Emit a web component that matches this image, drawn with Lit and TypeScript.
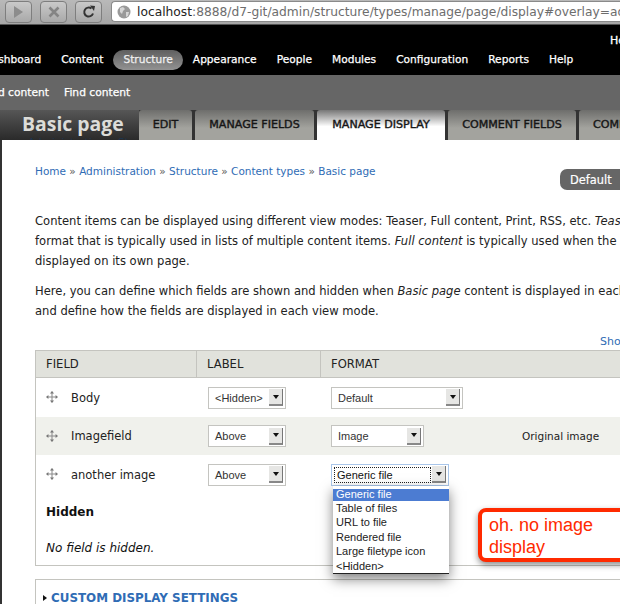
import { LitElement, html, css } from "lit";
import { customElement } from "lit/decorators.js";

const moveIcon = html`<svg class="move" width="12" height="12" viewBox="0 0 14 14">
  <path d="M7 1v12M1 7h12" stroke="#8a8a8a" stroke-width="1.2" fill="none" />
  <path d="M7 0l2.400 2.800H4.600zM7 14l-2.400-2.800h4.800zM0 7l2.800-2.400v4.800zM14 7l-2.800 2.400V4.600z" fill="#777" />
</svg>`;

@customElement("fake-select")
class FakeSelect extends LitElement {
  static properties = { label: {}, w: {}, focused: { type: Boolean } };
  label = "";
  w = "78";
  focused = false;

  static styles = css`
    :host {
      display: block;
      margin-top: 1px;
      font: 11px "Liberation Sans", sans-serif;
    }
    .box {
      box-sizing: border-box;
      height: 22px;
      border: 1px solid #c4c4c0;
      background: #fff;
      display: flex;
      align-items: center;
      padding: 0 2px 0 5px;
      color: #333;
    }
    .focused {
      border-color: #a9c6ea;
      padding-left: 2px;
    }
    .text {
      flex: 1;
      white-space: nowrap;
      line-height: 14px;
      padding-left: 1px;
    }
    .focused .text {
      border: 1px dotted #222;
      color: #111;
      margin-right: 1px;
      padding-left: 2px;
    }
    .btn {
      flex: none;
      width: 13px;
      height: 15px;
      background: #e6e6e4;
      border-right: 1px solid #777;
      border-bottom: 2px solid #888;
      display: flex;
      align-items: center;
      justify-content: center;
    }
    .btn i {
      border: 3.5px solid transparent;
      border-top: 4px solid #111;
      border-bottom: 0;
    }
  `;

  render() {
    return html`<div class="box ${this.focused ? "focused" : ""}" style="width:${this.w}px">
      <span class="text">${this.label}</span><span class="btn"><i></i></span>
    </div>`;
  }
}

@customElement("app-root")
export class AppRoot extends LitElement {
  static styles = css`
    :host {
      display: block;
      width: 620px;
      height: 604px;
      overflow: hidden;
      position: relative;
      background: #fff;
      font: 11px "DejaVu Sans", sans-serif;
      color: #111;
    }

    /* browser toolbar */
    .chrome {
      height: 25px;
      box-sizing: border-box;
      background: linear-gradient(#b9b9b9, #a6a6a6);
      border-bottom: 1px solid #555;
      display: flex;
      align-items: center;
      padding: 0 0 1px 5px;
    }
    .nav-btn {
      box-sizing: border-box;
      width: 27px;
      height: 22px;
      margin-right: 9px;
      border: 1px solid #7e7e7e;
      border-radius: 4px;
      background: linear-gradient(#c9c9c9, #a9a9a9);
      display: flex;
      align-items: center;
      justify-content: center;
      flex: none;
    }
    .nav-btn:first-child,
    .nav-btn:nth-child(2) {
      margin-right: 8px;
    }
    .url {
      flex: 1;
      height: 21px;
      box-sizing: border-box;
      background: #fff;
      border: 1px solid #8a8a8a;
      border-right: 0;
      border-radius: 4px 0 0 4px;
      display: flex;
      align-items: center;
      padding-left: 5px;
      gap: 6px;
      font-size: 12.25px;
      white-space: nowrap;
      overflow: hidden;
      color: #6d6d6d;
    }
    .url b {
      font-weight: normal;
      color: #222;
    }

    /* admin toolbar */
    .top {
      height: 50px;
      background: #000;
      position: relative;
    }
    .hello {
      position: absolute;
      left: 610px;
      top: 9px;
      color: #fff;
      white-space: nowrap;
      -webkit-text-stroke: 0.3px #fff;
    }
    .menu {
      position: absolute;
      left: -26.500px;
      right: 0;
      top: 25px;
      height: 20px;
      display: flex;
      align-items: center;
      color: #fff;
      font-size: 10.64px;
      white-space: nowrap;
      -webkit-text-stroke: 0.25px #fff;
    }
    .menu span {
      padding: 0 10px;
      line-height: 20px;
    }
    .menu .on {
      border-radius: 10px;
      background: linear-gradient(#5f5f5f, #929292);
      color: #e4e4e4;
    }
    .sub {
      height: 35px;
      background: #666;
      display: flex;
      align-items: center;
      gap: 15px;
      color: #fff;
      font-size: 10.7px;
      white-space: nowrap;
      margin-left: -16px;
      -webkit-text-stroke: 0.25px #fff;
    }

    /* title and tabs */
    .head {
      height: 30px;
      background: linear-gradient(#565656, #2a2a2a);
      position: relative;
      display: flex;
    }
    .ghost {
      position: absolute;
      left: -16px;
      top: 26px;
      color: #1d3550;
      font-size: 10.5px;
      white-space: nowrap;
    }
    h1 {
      margin: 0;
      width: 139px;
      box-sizing: border-box;
      padding: 1px 0 0 22px;
      font: bold 19.4px/26px "Open Sans", sans-serif;
      color: #dcdcd8;
      white-space: nowrap;
      position: relative;
      flex: none;
    }
    .tabs {
      flex: 1;
      display: flex;
      background: #333;
      position: relative;
    }
    .tab {
      box-sizing: border-box;
      height: 30px;
      margin-right: 3px;
      flex: none;
      background: linear-gradient(#6e6e6c, #a3a39e 60%);
      border-radius: 3px 3px 0 0;
      font-size: 11.1px;
      -webkit-text-stroke: 0.4px #161616;
      color: #161616;
      padding-top: 8px;
      text-align: center;
      white-space: nowrap;
    }
    .tab.on {
      background: linear-gradient(#777, #fff 55%);
    }
    .tab.last {
      width: 80px;
      text-align: left;
      padding-left: 14px;
    }

    /* page body */
    .page {
      margin-left: 2px;
      position: relative;
      height: 464px;
      background: #fff;
      box-shadow: -2px 0 0 #333;
      padding: 25px 0 0 33px;
      box-sizing: border-box;
      white-space: nowrap;
    }
    a {
      color: #2f6cb5;
      text-decoration: none;
    }
    .crumbs {
      height: 20px;
      color: #555;
      font-size: 10.5px;
    }
    .default {
      position: absolute;
      left: 558px;
      top: 29px;
      width: 70px;
      height: 21px;
      border-radius: 7px;
      background: #666;
      color: #fff;
      font-size: 11.4px;
      -webkit-text-stroke: 0.2px #fff;
      line-height: 22px;
      padding-left: 10px;
      box-sizing: border-box;
    }
    p {
      margin: 0 0 10px;
      line-height: 20px;
      color: #222;
      font-size: 11.56px;
    }
    .intro {
      margin-top: 26px;
    }
    .show {
      position: absolute;
      left: 598px;
      top: 195px;
      color: #2f6cb5;
    }
    .table {
      margin-top: 29px;
      width: 620px;
      box-sizing: border-box;
      border: 1px solid #c4c4bf;
      height: 216px;
    }
    .row {
      display: grid;
      grid-template-columns: 161px 124px 1fr;
      align-items: center;
    }
    .thead {
      height: 26px;
      background: #e1e2dc;
      border-bottom: 1px solid #c4c4bf;
      color: #222;
      font-size: 11.6px;
    }
    .thead div {
      height: 26px;
      line-height: 26px;
      padding-left: 10px;
      border-right: 1px solid #c4c4bf;
    }
    .thead div:last-child {
      border-right: 0;
    }
    .tr {
      height: 38.500px;
    }
    .tr.alt {
      background: #f0f1ec;
    }
    .cell-name {
      display: flex;
      align-items: center;
      padding-left: 10px;
      gap: 13px;
      font-size: 11.5px;
      color: #222;
    }
    .cell-name span {
      padding-top: 1px;
    }
    .cell-label {
      padding-left: 11px;
    }
    .cell-format {
      padding-left: 10px;
      display: flex;
      align-items: center;
    }
    .summary {
      margin-left: 98px;
      color: #222;
      font-size: 10.5px;
    }
    .hidden-title {
      font-weight: bold;
      font-size: 12px;
      margin: 9px 0 0 10px;
      line-height: 18px;
    }
    .no-field {
      font-style: italic;
      font-size: 12px;
      margin: 18px 0 0 10px;
      line-height: 18px;
    }
    .fieldset {
      margin-top: 13px;
      width: 620px;
      box-sizing: border-box;
      border-top: 1px solid #c4c4bf;
      border-left: 1px solid #c4c4bf;
      padding: 9px 0 0 7px;
      display: flex;
      align-items: center;
      height: 28px;
      gap: 4px;
      color: #2f6cb5;
      font-weight: bold;
      font-size: 11.9px;
    }
    .fieldset i {
      border: 3.500px solid transparent;
      border-left: 4px solid #111;
      border-right: 0;
    }

    /* open select popup */
    .popup {
      position: absolute;
      left: 333px;
      top: 486px;
      width: 116px;
      height: 88px;
      box-sizing: border-box;
      background: #fff;
      padding-top: 3px;
      font: 11px/14.400px "Liberation Sans", sans-serif;
      color: #222;
      box-shadow: 0 5px 12px rgba(0, 0, 0, 0.5);
      border-bottom: 1px solid #222;
    }
    .popup div {
      padding-left: 3px;
      height: 14.400px;
      white-space: nowrap;
    }
    .popup .sel {
      height: 12px;
      line-height: 11px;
      background: #4c7cd2;
      color: #fff;
    }

    /* annotation */
    .note {
      position: absolute;
      left: 478px;
      top: 508px;
      width: 160px;
      height: 54px;
      box-sizing: border-box;
      background: #fff;
      border: 4px solid #ff2a00;
      border-radius: 8px;
      box-shadow: 0 3px 6px rgba(0, 0, 0, 0.45);
      color: #ff2a00;
      font: 18px/22px "Liberation Sans", sans-serif;
      padding: 2px 0 0 7px;
    }
  `;

  render() {
    return html`
      <div class="chrome">
        <div class="nav-btn">
          <svg width="11" height="12" viewBox="0 0 11 12"><path d="M1 0l9 6-9 6z" fill="#8c8c8c" /></svg>
        </div>
        <div class="nav-btn">
          <svg width="12" height="12" viewBox="0 0 12 12"><path d="M1.500 1.500l9 9M10.500 1.500l-9 9" stroke="#848484" stroke-width="2.600" /></svg>
        </div>
        <div class="nav-btn">
          <svg width="14" height="14" viewBox="0 0 14 14">
            <path d="M11 8.500A4.500 4.500 0 1 1 9.500 3.500" stroke="#333" stroke-width="2" fill="none" />
            <path d="M8 0.500l5 0.500-1 5z" fill="#333" />
          </svg>
        </div>
        <div class="url">
          <svg width="14" height="14" viewBox="0 0 14 14" style="flex:none">
            <circle cx="7" cy="7" r="6.500" fill="#9a9a9a" />
            <path d="M3 3l3-1 2 2-2 2-1 3-2-2zM9 7l3 0-1 4-2 1z" fill="#d6d6d6" />
          </svg>
          <span><b>localhost</b>:8888/d7-git/admin/structure/types/manage/page/display#overlay=admin</span>
        </div>
      </div>

      <div class="top">
        <div class="hello">Hello admin</div>
        <div class="menu">
          <span>Dashboard</span><span>Content</span><span class="on">Structure</span><span>Appearance</span><span>People</span><span>Modules</span><span>Configuration</span><span>Reports</span><span>Help</span>
        </div>
      </div>
      <div class="sub"><span>Add content</span><span>Find content</span></div>

      <div class="head">
        <div class="ghost">Home » Administration » Structure</div>
        <h1>Basic page</h1>
        <div class="tabs">
          <div class="tab" style="width:53px">EDIT</div>
          <div class="tab" style="width:119px">MANAGE FIELDS</div>
          <div class="tab on" style="width:128px">MANAGE DISPLAY</div>
          <div class="tab" style="width:128px">COMMENT FIELDS</div>
          <div class="tab last">COMMENT DISPLAY</div>
        </div>
      </div>

      <div class="page">
        <div class="crumbs">
          <a>Home</a> » <a>Administration</a> » <a>Structure</a> » <a>Content types</a> » <a>Basic page</a>
        </div>
        <div class="default">Default</div>
        <p class="intro">Content items can be displayed using different view modes: Teaser, Full content, Print, RSS, etc. <em>Teaser</em> is a short<br />
          format that is typically used in lists of multiple content items. <em>Full content</em> is typically used when the content is<br />
          displayed on its own page.</p>
        <p>Here, you can define which fields are shown and hidden when <em>Basic page</em> content is displayed in each view mode,<br />
          and define how the fields are displayed in each view mode.</p>
        <div class="show">Show</div>

        <div class="table">
          <div class="row thead"><div>FIELD</div><div>LABEL</div><div>FORMAT</div></div>
          <div class="row tr">
            <div class="cell-name">${moveIcon}<span>Body</span></div>
            <div class="cell-label"><fake-select label="<Hidden>"></fake-select></div>
            <div class="cell-format"><fake-select label="Default" w="132"></fake-select></div>
          </div>
          <div class="row tr alt">
            <div class="cell-name">${moveIcon}<span>Imagefield</span></div>
            <div class="cell-label"><fake-select label="Above"></fake-select></div>
            <div class="cell-format"><fake-select label="Image" w="93"></fake-select><span class="summary">Original image</span></div>
          </div>
          <div class="row tr">
            <div class="cell-name">${moveIcon}<span>another image</span></div>
            <div class="cell-label"><fake-select label="Above"></fake-select></div>
            <div class="cell-format"><fake-select label="Generic file" w="118" focused></fake-select></div>
          </div>
          <div class="hidden-title">Hidden</div>
          <div class="no-field">No field is hidden.</div>
        </div>

        <div class="fieldset"><i></i><span>CUSTOM DISPLAY SETTINGS</span></div>
      </div>

      <div class="popup">
        <div class="sel">Generic file</div>
        <div>Table of files</div>
        <div>URL to file</div>
        <div>Rendered file</div>
        <div>Large filetype icon</div>
        <div>&lt;Hidden&gt;</div>
      </div>

      <div class="note">oh. no image<br />display</div>
    `;
  }
}
